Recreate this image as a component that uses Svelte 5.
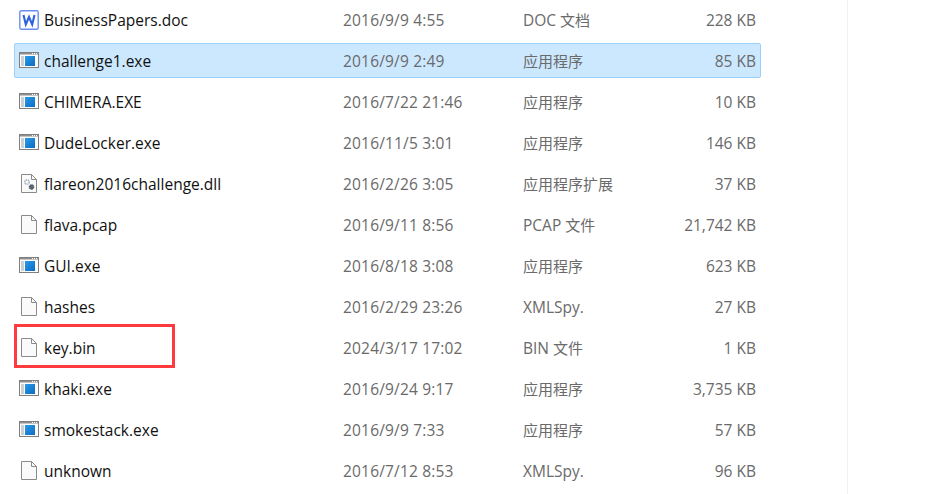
<script>
  const files = [
    { n: 'BusinessPapers.doc', d: '2016/9/9 4:55', l: 'DOC ', c: '文档', s: '228 KB', i: 'word' },
    { n: 'challenge1.exe', d: '2016/9/9 2:49', c: '应用程序', s: '85 KB', i: 'exe', sel: true },
    { n: 'CHIMERA.EXE', d: '2016/7/22 21:46', c: '应用程序', s: '10 KB', i: 'exe' },
    { n: 'DudeLocker.exe', d: '2016/11/5 3:01', c: '应用程序', s: '146 KB', i: 'exe' },
    { n: 'flareon2016challenge.dll', d: '2016/2/26 3:05', c: '应用程序扩展', s: '37 KB', i: 'dll' },
    { n: 'flava.pcap', d: '2016/9/11 8:56', l: 'PCAP ', c: '文件', s: '21,742 KB', i: 'file' },
    { n: 'GUI.exe', d: '2016/8/18 3:08', c: '应用程序', s: '623 KB', i: 'exe' },
    { n: 'hashes', d: '2016/2/29 23:26', l: 'XMLSpy.', s: '27 KB', i: 'file' },
    { n: 'key.bin', d: '2024/3/17 17:02', l: 'BIN ', c: '文件', s: '1 KB', i: 'file', mark: true },
    { n: 'khaki.exe', d: '2016/9/24 9:17', c: '应用程序', s: '3,735 KB', i: 'exe' },
    { n: 'smokestack.exe', d: '2016/9/9 7:33', c: '应用程序', s: '57 KB', i: 'exe' },
    { n: 'unknown', d: '2016/7/12 8:53', l: 'XMLSpy.', s: '96 KB', i: 'file' }
  ];
</script>

<div class="page">
  <svg width="0" height="0" class="defs">
    <defs>
      <linearGradient id="blue" x1="0" y1="0" x2="1" y2="1">
        <stop offset="0" stop-color="#2a9be8" />
        <stop offset="1" stop-color="#0b6cc4" />
      </linearGradient>
    </defs>
  </svg>
  <div class="list">
    {#each files as f}
      <div class="row" class:sel={f.sel}>
        <span class="icon">
          {#if f.i === 'word'}
            <svg width="20" height="20" viewBox="0 0 20 20">
              <rect x="0.8" y="0.8" width="18.4" height="18.4" rx="1.5" fill="#fff" stroke="#6a8df2" stroke-width="1.4" />
              <path d="M4.5 5 L6.8 14.5 L10 7 L13.2 14.5 L15.5 5" fill="none" stroke="#2f62e0" stroke-width="2.1" />
            </svg>
          {:else if f.i === 'exe'}
            <svg width="20" height="20" viewBox="0 0 20 20">
              <rect x="0.5" y="1.5" width="19" height="15" fill="#fdfdfd" stroke="#7f7f7f" />
              <rect x="1" y="2" width="18" height="1.5" fill="#8e8e8e" />
              <path d="M13 2.5h1M15 2.5h1M17 2.5h1" stroke="#fff" stroke-width="1" />
              <path d="M2 6h3M2 8h3M2 10h3M2 12h3M2 14h3" stroke="#a0a0a0" stroke-width="1" />
              <rect x="6" y="5" width="10" height="10" fill="url(#blue)" />
            </svg>
          {:else}
            <svg width="20" height="20" viewBox="0 0 20 20">
              <path d="M2.5 0.5H12.5L17.5 5.5V18.5H2.5Z" fill="#fafafa" stroke="#8a8a8a" />
              <path d="M12.5 0.5V5.5H17.5" fill="none" stroke="#8a8a8a" />
              {#if f.i === 'dll'}
                <circle cx="8" cy="8" r="2.2" fill="none" stroke="#a9b4bf" stroke-width="1.6" stroke-dasharray="1.4 0.6" />
                <circle cx="12.5" cy="13" r="2.2" fill="#5d6a75" stroke="#46525c" stroke-width="1.2" stroke-dasharray="1.4 0.6" />
              {/if}
            </svg>
          {/if}
        </span>
        <span class="name">{f.n}</span>
        <span class="date">{f.d}</span>
        <span class="type">{f.l ?? ''}<span class="cjk">{f.c ?? ''}</span></span>
        <span class="size">{f.s}</span>
        {#if f.mark}<span class="mark"></span>{/if}
      </div>
    {/each}
  </div>
</div>

<style>
  :global(body) {
    margin: 0;
    background: #fff;
  }
  .defs {
    position: absolute;
  }
  .page {
    width: 928px;
    height: 494px;
    overflow: hidden;
    box-sizing: border-box;
    padding-left: 14px;
    font-family: "Open Sans", "Noto Sans CJK SC", sans-serif;
    font-size: 15.5px;
  }
  .list {
    width: 834px;
    height: 494px;
    padding-top: 2px;
    border-right: 1px solid #f1f1f1;
    box-sizing: border-box;
  }
  .row {
    position: relative;
    width: 747px;
    height: 35px;
    margin-bottom: 6px;
    display: grid;
    grid-template-columns: 29px 299px 180px 1fr 110px;
    align-items: center;
    box-sizing: border-box;
    border: 1px solid transparent;
    border-radius: 2px;
    padding: 0 4px 0 0;
  }
  .row.sel {
    background: #cce8ff;
    border-color: #99d1ff;
  }
  .icon {
    display: flex;
    align-items: center;
    padding-left: 4px;
  }
  .name {
    color: #111;
  }
  .date,
  .type,
  .size {
    color: #6a6a6a;
  }
  .date {
    letter-spacing: 0.18px;
  }
  .cjk {
    font-size: 15px;
  }
  .size {
    text-align: right;
  }
  .mark {
    position: absolute;
    left: -1px;
    top: -7px;
    width: 161px;
    height: 44px;
    box-sizing: border-box;
    border: 3px solid #ff3b3f;
  }
</style>
